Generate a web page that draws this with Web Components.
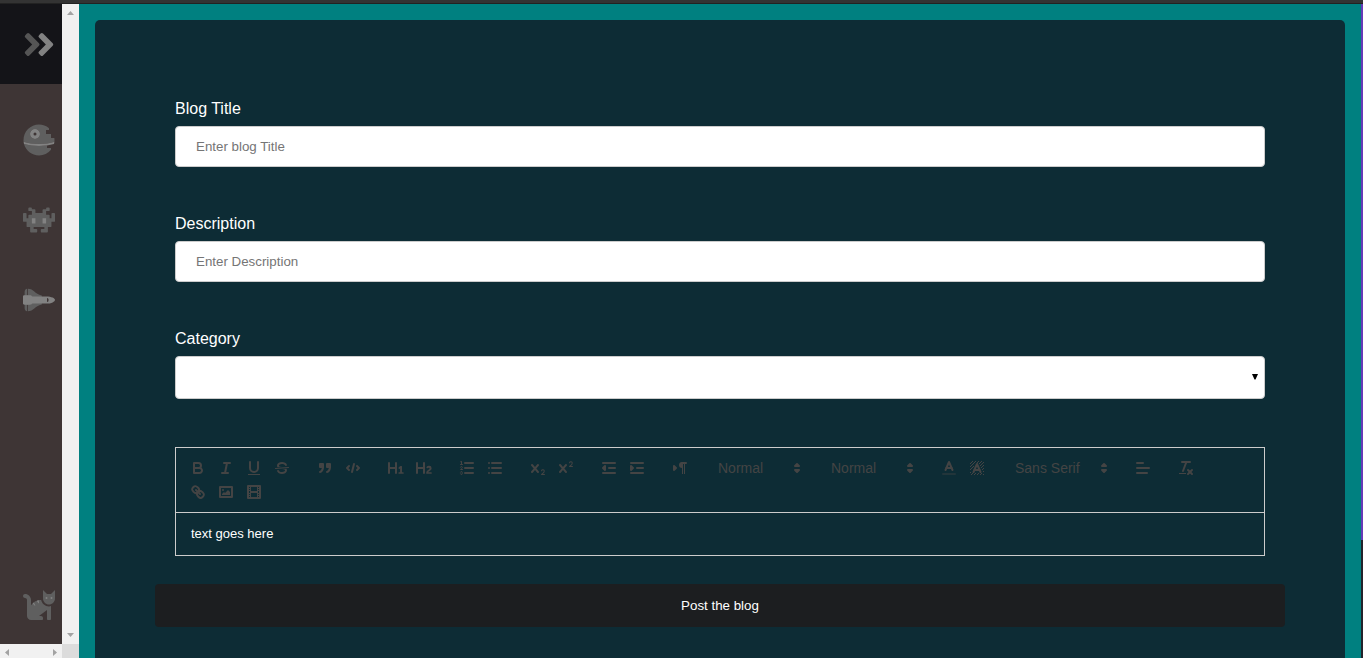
<!DOCTYPE html>
<html lang="en">
<head>
<meta charset="utf-8">
<title>Blog editor</title>
<style>
html, body { margin: 0; height: 100%; }
body { font-family: "Liberation Sans", Arial, sans-serif; font-size: 16px; color: #fff; overflow: hidden; background: #008080; }
</style>
</head>
<body>
<blog-page></blog-page>
<script>
const define = (name, html, setup) => {
  const template = document.createElement('template');
  template.innerHTML = html;
  customElements.define(name, class extends HTMLElement {
    constructor() {
      super();
      this.attachShadow({ mode: 'open' }).appendChild(template.content.cloneNode(true));
    }
    connectedCallback() { if (setup) setup(this, this.shadowRoot); }
  });
};

const line = (x1, x2, y1, y2 = y1, c = 's') => `<line class="${c}" x1="${x1}" x2="${x2}" y1="${y1}" y2="${y2}"/>`;
const rect = (x, y, w, h, c = 'f') => `<rect class="${c}" x="${x}" y="${y}" width="${w}" height="${h}"/>`;
const path = (d, c = 'f') => `<path class="${c}" d="${d}"/>`;
const poly = (p, c = 's') => `<polyline class="${c}" points="${p}"/>`;
const cross = path('M9.65,5.241a1,1,0,0,0-1.409.108L6,7.964,3.759,5.349A1,1,0,0,0,2.192,6.59178Q2.21541,6.6213,2.241,6.649L4.684,9.5,2.241,12.35A1,1,0,0,0,3.71,13.70722q0.02557-.02768.049-0.05722L6,11.036,8.241,13.65a1,1,0,1,0,1.567-1.24277Q9.78459,12.3777,9.759,12.35L7.316,9.5,9.759,6.651A1,1,0,0,0,9.65,5.241Z');

const hatch = () => {
  let out = '';
  for (let y = 2; y < 16; y++) {
    for (let x = 2; x < 16; x++) {
      const half = 2 + (y - 4) * 0.45;
      const nearLetter = y > 3 && y < 14 && Math.abs(x - 8.5) < half;
      if ((x + y) % 3 === 0 && !nearLetter) out += rect(x, y, 1, 1);
    }
  }
  return out;
};

const glyphs = {
  bold: path('M5,4H9.5A2.5,2.5,0,0,1,12,6.5v0A2.5,2.5,0,0,1,9.5,9H5A0,0,0,0,1,5,9V4A0,0,0,0,1,5,4Z', 's') + path('M5,9h5.5A2.5,2.5,0,0,1,13,11.5v0A2.5,2.5,0,0,1,10.5,14H5a0,0,0,0,1,0,0V9A0,0,0,0,1,5,9Z', 's'),
  italic: line(7, 13, 4) + line(5, 11, 14) + line(8, 10, 14, 4),
  underline: path('M5,3V9a4.012,4.012,0,0,0,4,4H9a4.012,4.012,0,0,0,4-4V3', 's') + rect(3, 15, 12, 1),
  strike: line(15.5, 2.5, 8.5, 9.5, 's t') + path('M9.007,8C6.542,7.791,6,7.519,6,6.5,6,5.792,7.283,5,9,5c1.571,0,2.765.679,2.969,1.309a1,1,0,0,0,1.9-.617C13.356,4.106,11.354,3,9,3,6.2,3,4,4.538,4,6.5a3.2,3.2,0,0,0,.5,1.843Z') + path('M8.984,10C11.457,10.208,12,10.479,12,11.5c0,0.708-1.283,1.5-3,1.5-1.571,0-2.765-.679-2.969-1.309a1,1,0,1,0-1.9.617C4.644,13.894,6.646,15,9,15c2.8,0,5-1.538,5-3.5a3.2,3.2,0,0,0-.5-1.843Z'),
  quote: rect(4, 5, 3, 3, 'f s') + rect(11, 5, 3, 3, 'f s') + path('M7,8c0,4.031-3,5-3,5', 'f s') + path('M14,8c0,4.031-3,5-3,5', 'f s'),
  code: poly('5 7 3 9 5 11') + poly('13 7 15 9 13 11') + line(10, 8, 5, 13),
  h1: path('M10,4V14a1,1,0,0,1-2,0V10H3v4a1,1,0,0,1-2,0V4A1,1,0,0,1,3,4V8H8V4a1,1,0,0,1,2,0Zm6.06787,9.209H14.98975V7.59863a.54085.54085,0,0,0-.605-.60547h-.62744a1.01119,1.01119,0,0,0-.748.29688L11.645,8.56641a.5435.5435,0,0,0-.022.8584l.28613.30762a.53861.53861,0,0,0,.84717.0332l.09912-.08789a1.2137,1.2137,0,0,0,.2417-.35254h.02246s-.01123.30859-.01123.60547V13.209H12.041a.54085.54085,0,0,0-.605.60547v.43945a.54085.54085,0,0,0,.605.60547h4.02686a.54085.54085,0,0,0,.605-.60547v-.43945A.54085.54085,0,0,0,16.06787,13.209Z'),
  h2: path('M16.73975,13.81445v.43945a.54085.54085,0,0,1-.605.60547H11.855a.58392.58392,0,0,1-.64893-.60547V14.0127c0-2.90527,3.39941-3.42187,3.39941-4.55469a.77675.77675,0,0,0-.84717-.78125,1.17684,1.17684,0,0,0-.83594.38477c-.2749.26367-.561.374-.85791.13184l-.4292-.34082c-.30811-.24219-.38525-.51758-.1543-.81445a2.97155,2.97155,0,0,1,2.45361-1.17676,2.45393,2.45393,0,0,1,2.68408,2.40918c0,2.45312-3.1792,2.92676-3.27832,3.93848h2.79443A.54085.54085,0,0,1,16.73975,13.81445ZM9,3A.99974.99974,0,0,0,8,4V8H3V4A1,1,0,0,0,1,4V14a1,1,0,0,0,2,0V10H8v4a1,1,0,0,0,2,0V4A.99974.99974,0,0,0,9,3Z'),
  ordered: line(7, 15, 4) + line(7, 15, 9) + line(7, 15, 14) + line(2.5, 4.5, 5.5, 5.5, 's t') + path('M3.5,6A0.5,0.5,0,0,1,3,5.5V3.085l-0.276.138A0.5,0.5,0,0,1,2.053,3c-0.124-.247-0.023-0.324.224-0.447l1-.5A0.5,0.5,0,0,1,4,2.5v3A0.5,0.5,0,0,1,3.5,6Z') + path('M4.5,10.5h-2c0-.234,1.85-1.076,1.85-2.234A0.959,0.959,0,0,0,2.5,8.156', 's t') + path('M2.5,14.846a0.959,0.959,0,0,0,1.85-.109A0.7,0.7,0,0,0,3.75,14a0.688,0.688,0,0,0,.6-0.736,0.959,0.959,0,0,0-1.85-.109', 's t'),
  bullet: [4, 9, 14].map(y => line(6, 15, y) + line(3, 3, y)).join(''),
  sub: path('M15.5,15H13.861a3.858,3.858,0,0,0,1.914-2.975,1.8,1.8,0,0,0-1.6-1.751A1.921,1.921,0,0,0,12.021,11.7a0.50013,0.50013,0,1,0,.957.291h0a0.914,0.914,0,0,1,1.053-.725,0.81,0.81,0,0,1,.744.762c0,1.076-1.16971,1.86982-1.93971,2.43082A1.45639,1.45639,0,0,0,12,15.5a0.5,0.5,0,0,0,.5.5h3A0.5,0.5,0,0,0,15.5,15Z') + cross,
  sup: path('M15.5,7H13.861a4.015,4.015,0,0,0,1.914-2.975,1.8,1.8,0,0,0-1.6-1.751A1.922,1.922,0,0,0,12.021,3.7a0.5,0.5,0,1,0,.957.291,0.917,0.917,0,0,1,1.053-.725,0.81,0.81,0,0,1,.744.762c0,1.077-1.164,1.925-1.934,2.486A1.423,1.423,0,0,0,12,7.5a0.5,0.5,0,0,0,.5.5h3A0.5,0.5,0,0,0,15.5,7Z') + cross,
  outdent: line(3, 15, 14) + line(3, 15, 4) + line(9, 15, 9) + poly('5 7 5 11 3 9 5 7', 'f s'),
  indent: line(3, 15, 14) + line(3, 15, 4) + line(9, 15, 9) + poly('3 7 3 11 5 9 3 7', 'f s'),
  direction: poly('3 11 5 9 3 7 3 11', 'f s') + line(15, 11, 4) + path('M11,3a3,3,0,0,0,0,6h1V3H11Z') + rect(11, 4, 1, 11) + rect(13, 4, 1, 11),
  color: `<g opacity=".4">${line(3, 15, 15)}</g>` + poly('5.5 11 9 3 12.5 11') + line(11.63, 6.38, 9),
  background: hatch() + poly('5.5 13 9 5 12.5 13') + line(11.63, 6.38, 11),
  align: line(3, 15, 9) + line(3, 13, 14) + line(3, 9, 4),
  clean: line(5, 13, 3) + line(6, 9.35, 12, 3) + line(11, 15, 11, 15) + line(15, 11, 11, 15) + rect(2, 14, 7, 1),
  link: line(7, 11, 7, 11) + path('M8.9,4.577a3.476,3.476,0,0,1,.36,4.679A3.476,3.476,0,0,1,4.577,8.9C3.185,7.5,2.035,6.4,4.217,4.217S7.5,3.185,8.9,4.577Z', 's') + path('M13.423,9.1a3.476,3.476,0,0,0-4.679-.36,3.476,3.476,0,0,0,.36,4.679c1.392,1.392,2.5,2.542,4.679.36S14.815,10.5,13.423,9.1Z', 's'),
  image: rect(3, 4, 12, 10, 's') + '<circle class="f" cx="6" cy="7" r="1"/>' + poly('5 12 5 11 7 9 8 10 11 7 13 9 13 12 5 12', 'f'),
  video: rect(3, 3, 12, 12, 's') + rect(5, 3, 1, 12) + rect(12, 3, 1, 12) + rect(5, 8, 8, 2) + [5, 7, 10, 12].map(y => rect(3, y, 3, 1) + rect(12, y, 3, 1)).join(''),
  updown: poly('7 11 9 13 11 11 7 11') + poly('7 7 9 5 11 7 7 7')
};

const glyphStyle = `
svg { display: block; width: 18px; height: 18px; }
.s { stroke: #444; stroke-width: 2; fill: none; stroke-linecap: round; stroke-linejoin: round; }
.t { stroke-width: 1; }
.f { fill: #444; }`;

define('tool-button', `<style>
:host { display: block; }
button { display: block; box-sizing: border-box; width: 28px; height: 24px; padding: 3px 5px; border: 0; background: none; }
${glyphStyle}
</style><button type="button"><svg viewBox="0 0 18 18" aria-hidden="true"></svg></button>`, (host, root) => {
  root.querySelector('svg').innerHTML = glyphs[host.getAttribute('icon')];
  root.querySelector('button').setAttribute('aria-label', host.getAttribute('icon'));
});

define('tool-picker', `<style>
:host { display: grid; width: 98px; height: 24px; align-items: center; }
:host([wide]) { width: 108px; }
select, svg { grid-area: 1 / 1; }
select { appearance: none; width: 100%; height: 24px; margin: 0; padding: 0 0 0 8px; border: 1px solid transparent; background: none; color: #444; font: 500 14px/22px "Liberation Sans", Arial, sans-serif; }
${glyphStyle}
svg { justify-self: end; margin-right: 1px; pointer-events: none; }
</style><select><option></option></select><svg viewBox="0 0 18 18" aria-hidden="true">${glyphs.updown}</svg>`, (host, root) => {
  root.querySelector('option').textContent = host.getAttribute('value');
  root.querySelector('select').setAttribute('aria-label', host.getAttribute('label'));
});

define('tool-group', `<style>:host { display: flex; margin-right: 15px; }</style><slot></slot>`);

const buttons = list => list.map(i => `<tool-button icon="${i}"></tool-button>`).join('');
define('rich-editor', `<style>
:host { display: block; border: 1px solid #ccc; }
.toolbar { display: flex; flex-wrap: wrap; padding: 8px; border-bottom: 1px solid #ccc; }
.text { padding: 12px 15px; font-size: 13px; line-height: 18px; outline: 0; }
</style>
<div class="toolbar" role="toolbar">
<tool-group>${buttons(['bold', 'italic', 'underline', 'strike'])}</tool-group>
<tool-group>${buttons(['quote', 'code'])}</tool-group>
<tool-group>${buttons(['h1', 'h2'])}</tool-group>
<tool-group>${buttons(['ordered', 'bullet'])}</tool-group>
<tool-group>${buttons(['sub', 'sup'])}</tool-group>
<tool-group>${buttons(['outdent', 'indent'])}</tool-group>
<tool-group>${buttons(['direction'])}</tool-group>
<tool-group><tool-picker label="Size" value="Normal"></tool-picker></tool-group>
<tool-group><tool-picker label="Heading" value="Normal"></tool-picker></tool-group>
<tool-group>${buttons(['color', 'background'])}</tool-group>
<tool-group><tool-picker wide label="Font" value="Sans Serif"></tool-picker></tool-group>
<tool-group>${buttons(['align'])}</tool-group>
<tool-group>${buttons(['clean'])}</tool-group>
<tool-group>${buttons(['link', 'image', 'video'])}</tool-group>
</div>
<div class="text" contenteditable="true" role="textbox" aria-label="Blog text">text goes here</div>`);

const fieldStyle = `
:host { display: block; }
label { display: block; line-height: 18px; margin-bottom: 8px; }
input, select { display: block; box-sizing: border-box; width: 100%; margin: 0; border: 1px solid #ccc; border-radius: 4px; background: #fff; color: #000; font-family: "Liberation Sans", Arial, sans-serif; }`;

define('text-field', `<style>${fieldStyle}
input { height: 41px; padding: 12px 20px; }
input::placeholder { color: #757575; }
</style><label for="field"></label><input id="field" type="text">`, (host, root) => {
  root.querySelector('label').textContent = host.getAttribute('label');
  root.querySelector('input').placeholder = host.getAttribute('hint');
});

define('select-field', `<style>${fieldStyle}
.box { display: grid; align-items: center; }
select, svg { grid-area: 1 / 1; }
select { appearance: none; height: 43px; padding: 12px 20px; }
svg { justify-self: end; width: 6px; height: 7px; margin-right: 7px; pointer-events: none; }
</style><label for="field"></label><div class="box"><select id="field"><option></option></select><svg viewBox="0 0 6 7" aria-hidden="true"><path d="M0 0H6L3.5 5.5H2.5Z"/></svg></div>`, (host, root) => {
  root.querySelector('label').textContent = host.getAttribute('label');
});

define('blog-form', `<style>
:host { display: block; box-sizing: border-box; min-height: 100vh; padding: 80px 60px; border-radius: 5px; background: #0d2c35; }
.fields { display: grid; gap: 48px; padding: 0 20px; margin-bottom: 28px; }
button { display: block; width: 100%; padding: 14px 20px; border: 0; border-radius: 4px; background: #1c1e20; color: #fff; font-family: "Liberation Sans", Arial, sans-serif; line-height: 15px; }
</style>
<form>
<div class="fields">
<text-field label="Blog Title" hint="Enter blog Title"></text-field>
<text-field label="Description" hint="Enter Description"></text-field>
<select-field label="Category"></select-field>
<rich-editor></rich-editor>
</div>
<button type="button">Post the blog</button>
</form>`);

define('nav-link', `<style>
:host { display: block; }
a { display: flex; align-items: center; height: 80px; padding-left: 23px; color: #828282; }
::slotted(svg) { display: block; flex: none; width: 32px; height: 32px; }
:host(.logo) ::slotted(svg) { height: 37px; }
</style><a href="#"><slot></slot></a>`, (host, root) => {
  root.querySelector('a').setAttribute('aria-label', host.getAttribute('label'));
});

define('side-bar', `<style>
:host { display: grid; grid-template: minmax(0, 1fr) 17px / 62px 17px; height: calc(100vh - 1px); background: #3e3535; }
nav { display: flex; flex-direction: column; overflow: hidden; }
.logo { background: #141418; margin-bottom: 16px; }
.last { margin-top: auto; }
.dim { fill: #5f5f5f; }
.logo .dim { fill: #555; }
.lit { fill: #828282; }
.track { display: flex; justify-content: space-between; align-items: center; background: #f1f1f1; }
.down { flex-direction: column; padding: 7px 0; }
.across { padding: 0 5px; }
.track svg { display: block; fill: #a3a3a3; }
.corner { background: #dcdcdc; }
</style>
<nav>
<nav-link class="logo" label="Expand"><svg viewBox="0 0 448 512"><path class="dim" d="M224 273L88.37 409a23.78 23.78 0 0 1-33.8 0L32 386.36a23.94 23.94 0 0 1 0-33.89l96.13-96.37L32 159.73a23.94 23.94 0 0 1 0-33.89l22.44-22.79a23.78 23.78 0 0 1 33.8 0L223.88 239a23.94 23.94 0 0 1 .1 34z"/><path class="lit" d="M415.89 273L280.34 409a23.77 23.77 0 0 1-33.79 0L224 386.26a23.94 23.94 0 0 1 0-33.89L320.11 256l-96-96.47a23.94 23.94 0 0 1 0-33.89l22.52-22.59a23.77 23.77 0 0 1 33.79 0L416 239a24 24 0 0 1-.11 34z"/></svg></nav-link>
<nav-link label="Station"><svg viewBox="0 0 512 512"><path class="dim" d="M501.70312,224H448V160H368V96h48V66.67383A246.86934,246.86934,0,0,0,256,8C119.03125,8,8,119.0332,8,256a250.017,250.017,0,0,0,1.72656,28.26562C81.19531,306.76953,165.47656,320,256,320s174.80469-13.23047,246.27344-35.73438A250.017,250.017,0,0,0,504,256,248.44936,248.44936,0,0,0,501.70312,224ZM192,240a80,80,0,1,1,80-80A80.00021,80.00021,0,0,1,192,240ZM384,343.13867A940.33806,940.33806,0,0,1,256,352c-87.34375,0-168.71094-11.46094-239.28906-31.73633C45.05859,426.01953,141.29688,504,256,504a247.45808,247.45808,0,0,0,192-91.0918V384H384Z"/><path class="lit" d="M256,320c-90.52344,0-174.80469-13.23047-246.27344-35.73438a246.11376,246.11376,0,0,0,6.98438,35.998C87.28906,340.53906,168.65625,352,256,352s168.71094-11.46094,239.28906-31.73633a246.11376,246.11376,0,0,0,6.98438-35.998C430.80469,306.76953,346.52344,320,256,320Zm-64-80a80,80,0,1,0-80-80A80.00021,80.00021,0,0,0,192,240Zm0-104a24,24,0,1,1-24,24A23.99993,23.99993,0,0,1,192,136Z"/></svg></nav-link>
<nav-link label="Monster"><svg viewBox="0 0 576 512"><path class="dim" d="M560,128H528a16,16,0,0,0-16,16v80H480V176a16,16,0,0,0-16-16H416V96h48a16,16,0,0,0,16-16V48a16,16,0,0,0-16-16H432a16,16,0,0,0-16,16V64H368a16,16,0,0,0-16,16v48H224V80a16,16,0,0,0-16-16H160V48a16,16,0,0,0-16-16H112A16,16,0,0,0,96,48V80a16,16,0,0,0,16,16h48v64H112a16,16,0,0,0-16,16v48H64V144a16,16,0,0,0-16-16H16A16,16,0,0,0,0,144V272a16,16,0,0,0,16,16H64v80a16,16,0,0,0,16,16h48v80a16,16,0,0,0,16,16h96a16,16,0,0,0,16-16V432a16,16,0,0,0-16-16H192V384H384v32H336a16,16,0,0,0-16,16v32a16,16,0,0,0,16,16h96a16,16,0,0,0,16-16V384h48a16,16,0,0,0,16-16V288h48a16,16,0,0,0,16-16V144A16,16,0,0,0,560,128Z"/><path class="lit" d="M160 224h64v96h-64zM352 224h64v96h-64z"/></svg></nav-link>
<nav-link label="Shuttle"><svg viewBox="0 0 640 512"><path class="dim" d="M376 168C229.157 137.747 219.403 32 96 32v128H80V32c-26.51 0-48 28.654-48 64v320c0 35.346 21.49 64 48 64V352h16v128c123.4 0 133.154-105.747 280-136z"/><path class="lit" d="M592.604 208.244C559.735 192.836 515.777 184 472 184H186.327C172 168 160 160 140 160H32c-23 0-32 10-32 24v144c0 14 9 24 32 24h108c20 0 32-8 46.327-24H472c43.777 0 87.735-8.836 120.604-24.244C622.282 289.845 640 271.992 640 256s-17.718-33.845-47.396-47.756zM488 296a8 8 0 0 1-8-8v-64a8 8 0 0 1 8-8c31.909 0 31.942 80 0 80z"/></svg></nav-link>
<nav-link class="last" label="Cat"><svg viewBox="0 0 512 512"><path class="dim" d="M290.59 192c-20.18 0-106.82 1.98-162.59 85.95V192c0-52.94-43.06-96-96-96-17.67 0-32 14.33-32 32s14.33 32 32 32c17.64 0 32 14.36 32 32v256c0 35.3 28.7 64 64 64h176c8.84 0 16-7.16 16-16v-16c0-17.67-14.33-32-32-32h-32l128-96v144c0 8.84 7.16 16 16 16h32c8.84 0 16-7.16 16-16V289.86c-10.29 2.67-20.89 4.54-32 4.54-61.81 0-113.52-44.05-125.41-102.4zM448 96h-64l-64-64v134.4c0 53.02 42.98 96 96 96s96-42.98 96-96V32l-64 64z"/><path class="lit" d="M154 246l20-16 24 48-8 4zM220 203l34-8 2 48-10 2z"/><circle class="lit" cx="376" cy="160" r="16"/><circle class="lit" cx="456" cy="160" r="16"/></svg></nav-link>
</nav>
<div class="track down"><svg width="7" height="4"><path d="M0 4L3.5 0L7 4Z"/></svg><svg width="7" height="4"><path d="M0 0L3.5 4L7 0Z"/></svg></div>
<div class="track across"><svg width="4" height="7"><path d="M4 0L0 3.5L4 7Z"/></svg><svg width="4" height="7"><path d="M0 0L4 3.5L0 7Z"/></svg></div>
<div class="corner"></div>`);

define('blog-page', `<style>
:host { display: block; height: 100vh; overflow: hidden; }
.top { height: 3px; background: #333; border-bottom: 1px solid #222; }
.body { display: grid; grid-template: minmax(0, 1fr) / auto minmax(0, 1fr) 2px; height: calc(100vh - 4px); }
main { padding: 16px; background: #008080; }
.edge { background: linear-gradient(#673ab7 82%, #23232b 82%); }
</style>
<div class="top"></div>
<div class="body"><side-bar></side-bar><main><blog-form></blog-form></main><div class="edge"></div></div>`);
</script>
</body>
</html>
